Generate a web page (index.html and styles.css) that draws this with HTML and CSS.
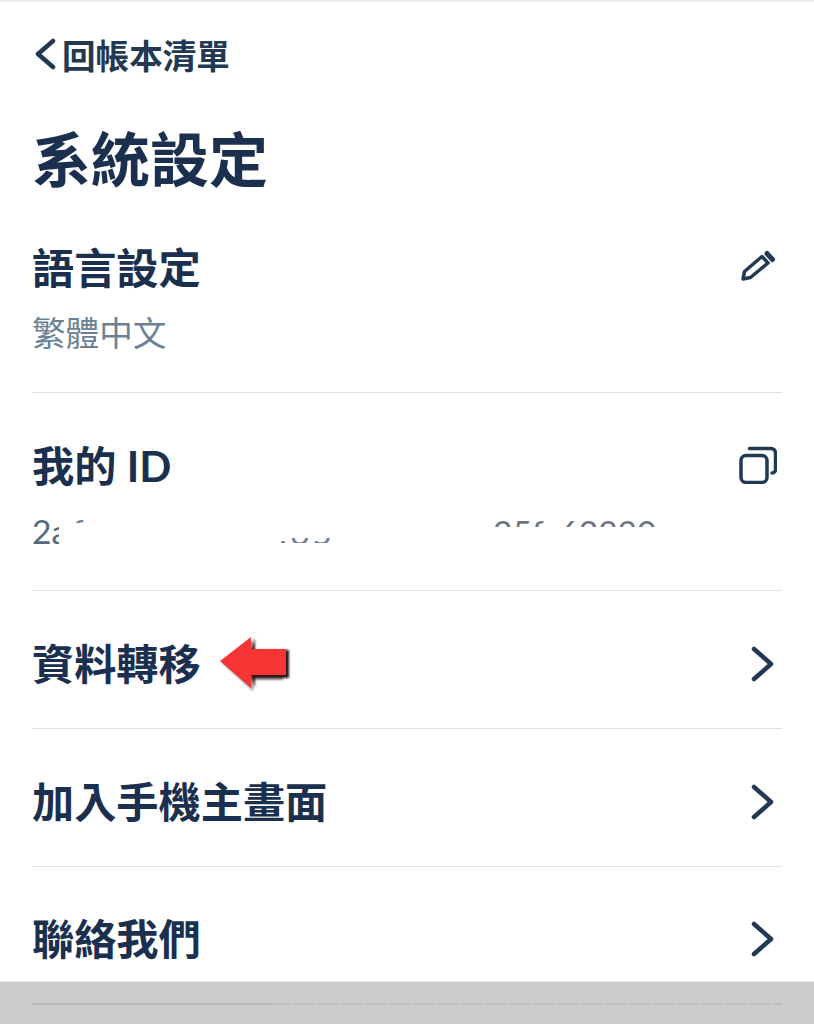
FILE: index.html
```html
<!DOCTYPE html>
<html lang="zh-Hant">

<head>
	<meta charset="utf-8">
	<title>系統設定</title>
	<link rel="stylesheet" href="styles.css">
</head>

<body>
	<div class="page">
		<a class="back-link">
			<svg class="back-icon" width="24" height="32" viewBox="0 0 24 32">
				<path d="M20 3 L5 16 L20 29" />
			</svg>
			<span>回帳本清單</span>
		</a>
		<h1 class="page-title">系統設定</h1>

		<div class="setting setting-tall">
			<div class="setting-main">
				<div class="setting-name">語言設定</div>
				<div class="setting-value">繁體中文</div>
			</div>
			<svg class="setting-icon icon-edit" width="36" height="32" viewBox="0 0 36 32">
				<path d="M2 29 L3.5 21.5 L21 6.5 L27 13 L9.5 27.5 Z" />
				<path class="icon-thick" d="M26 3.5 L31.5 9.5" />
			</svg>
		</div>

		<div class="setting setting-tall">
			<div class="setting-main">
				<div class="setting-name">我的 ID</div>
				<div class="setting-value id-line">
					<span class="id-part id-first">2a</span>
					<span class="id-part id-second">ff</span>
					<span class="id-part id-third">.65.</span>
					<span class="id-part id-fourth">25fc62330</span>
				</div>
			</div>
			<svg class="setting-icon icon-copy" width="38" height="38" viewBox="0 0 38 38">
				<rect x="2" y="9.5" width="26" height="27" rx="5" />
				<path d="M10.5 2.5 H32 A4.5 4.5 0 0 1 36.5 7 V23 A3.5 3.5 0 0 1 33 27" />
			</svg>
		</div>

		<div class="setting">
			<div class="setting-name">資料轉移</div>
			<svg class="mark-arrow" width="80" height="60" viewBox="0 0 80 60">
				<polygon class="arrow-grey" points="5,29 36,6 36,18 66,18 66,46 36,46 36,57" />
				<polygon class="arrow-dark" points="38,4 38,16 72,16 72,44 38,44 38,54 30,30" />
				<polygon class="arrow-red" points="3,27 34,3 34,15 69,15 69,41 34,41 34,54" />
			</svg>
			<svg class="setting-chevron" width="26" height="36" viewBox="0 0 26 36">
				<path d="M4 3 L21 18 L4 33" />
			</svg>
		</div>

		<div class="setting">
			<div class="setting-name">加入手機主畫面</div>
			<svg class="setting-chevron" width="26" height="36" viewBox="0 0 26 36">
				<path d="M4 3 L21 18 L4 33" />
			</svg>
		</div>

		<div class="setting setting-last">
			<div class="setting-name">聯絡我們</div>
			<svg class="setting-chevron" width="26" height="36" viewBox="0 0 26 36">
				<path d="M4 3 L21 18 L4 33" />
			</svg>
		</div>
	</div>

	<div class="dim-bar">
		<div class="dim-line"></div>
		<div class="dim-dash"></div>
	</div>
</body>

</html>
```

FILE: styles.css
```css
* {
	box-sizing: border-box;
}

html,
body {
	margin: 0;
	height: 1024px;
	overflow: hidden;
}

body {
	display: flex;
	flex-direction: column;
	background-color: #ffffff;
	color: #1b2f4e;
	font-family: Lato, "Noto Sans CJK TC", sans-serif;
}

.page {
	flex: none;
	height: 981px;
	padding: 0 32px;
	border-top: 2px solid #efefe8;
	display: flex;
	flex-direction: column;
}

.back-link {
	display: flex;
	flex: none;
	align-items: center;
	gap: 5px;
	height: 50px;
	margin-top: 27px;
	padding-left: 1px;
	font-size: 33.6px;
	font-weight: 700;
	color: #223853;
}

.back-icon path,
.setting-chevron path {
	fill: none;
	stroke: #223853;
	stroke-width: 4.5;
	stroke-linecap: round;
	stroke-linejoin: round;
}

.page-title {
	flex: none;
	margin: 45px 0 0;
	height: 71px;
	font-size: 59px;
	line-height: 71px;
	font-weight: 700;
}

.setting {
	display: flex;
	flex: none;
	align-items: center;
	height: 138px;
	padding-top: 8px;
	border-bottom: 1px solid #e2e2e2;
}

.setting-tall {
	height: 198px;
	padding-top: 0;
	align-items: flex-start;
}

.setting-last {
	height: 114px;
	padding-top: 30px;
	border-bottom: 0;
}

.setting-main {
	flex: 1;
}

.setting-name {
	font-size: 42.2px;
	line-height: 60px;
	font-weight: 700;
}

.setting-tall .setting-name {
	margin-top: 43px;
}

.setting-value {
	margin-top: 11px;
	height: 48px;
	font-size: 33.6px;
	line-height: 48px;
	color: #6c8196;
}

.id-line {
	display: flex;
}

.id-part {
	display: block;
	overflow: hidden;
	white-space: nowrap;
	flex: none;
}

.id-first {
	width: 27px;
	color: #54697f;
}

.id-second {
	width: 24px;
	height: 5px;
	margin: 11px 0 0 13px;
	line-height: 26px;
	letter-spacing: 8px;
}

.id-third {
	display: flex;
	align-items: flex-end;
	width: 56px;
	height: 5px;
	margin: 31px 0 0 183px;
	line-height: 22px;
	letter-spacing: 3px;
}

.id-fourth {
	width: 166px;
	height: 9px;
	margin: 11px 0 0 158px;
	line-height: 28px;
	color: #6b7480;
}

.setting-icon {
	flex: none;
	fill: none;
	stroke: #223853;
	stroke-width: 3.5;
	stroke-linejoin: round;
	stroke-linecap: round;
}

.icon-edit {
	margin-top: 55px;
	margin-right: 5px;
}

.icon-edit .icon-thick {
	stroke-width: 5;
}

.icon-copy {
	margin-top: 53px;
	margin-right: 5px;
}

.mark-arrow {
	flex: none;
	margin: 0 0 0 16px;
}

.arrow-grey {
	fill: #9a8f8f;
	filter: blur(1px);
}

.arrow-dark {
	fill: #2b1413;
	filter: blur(1px);
}

.arrow-red {
	fill: #f73535;
}

.setting-chevron {
	flex: none;
	margin-left: auto;
	margin-right: 6px;
}

.dim-bar {
	flex: none;
	height: 43px;
	padding: 21px 32px 0;
	background-color: #cccccc;
	border-top: 1px solid #e4e4e4;
	display: flex;
	align-items: flex-start;
}

.dim-line {
	width: 238px;
	height: 2px;
	background-color: #b8b8b8;
}

.dim-dash {
	flex: 1;
	height: 2px;
	background-image: repeating-linear-gradient(90deg, #bfbfbf 0, #bfbfbf 9px, #c8c8c8 9px, #c8c8c8 12px);
}
```
